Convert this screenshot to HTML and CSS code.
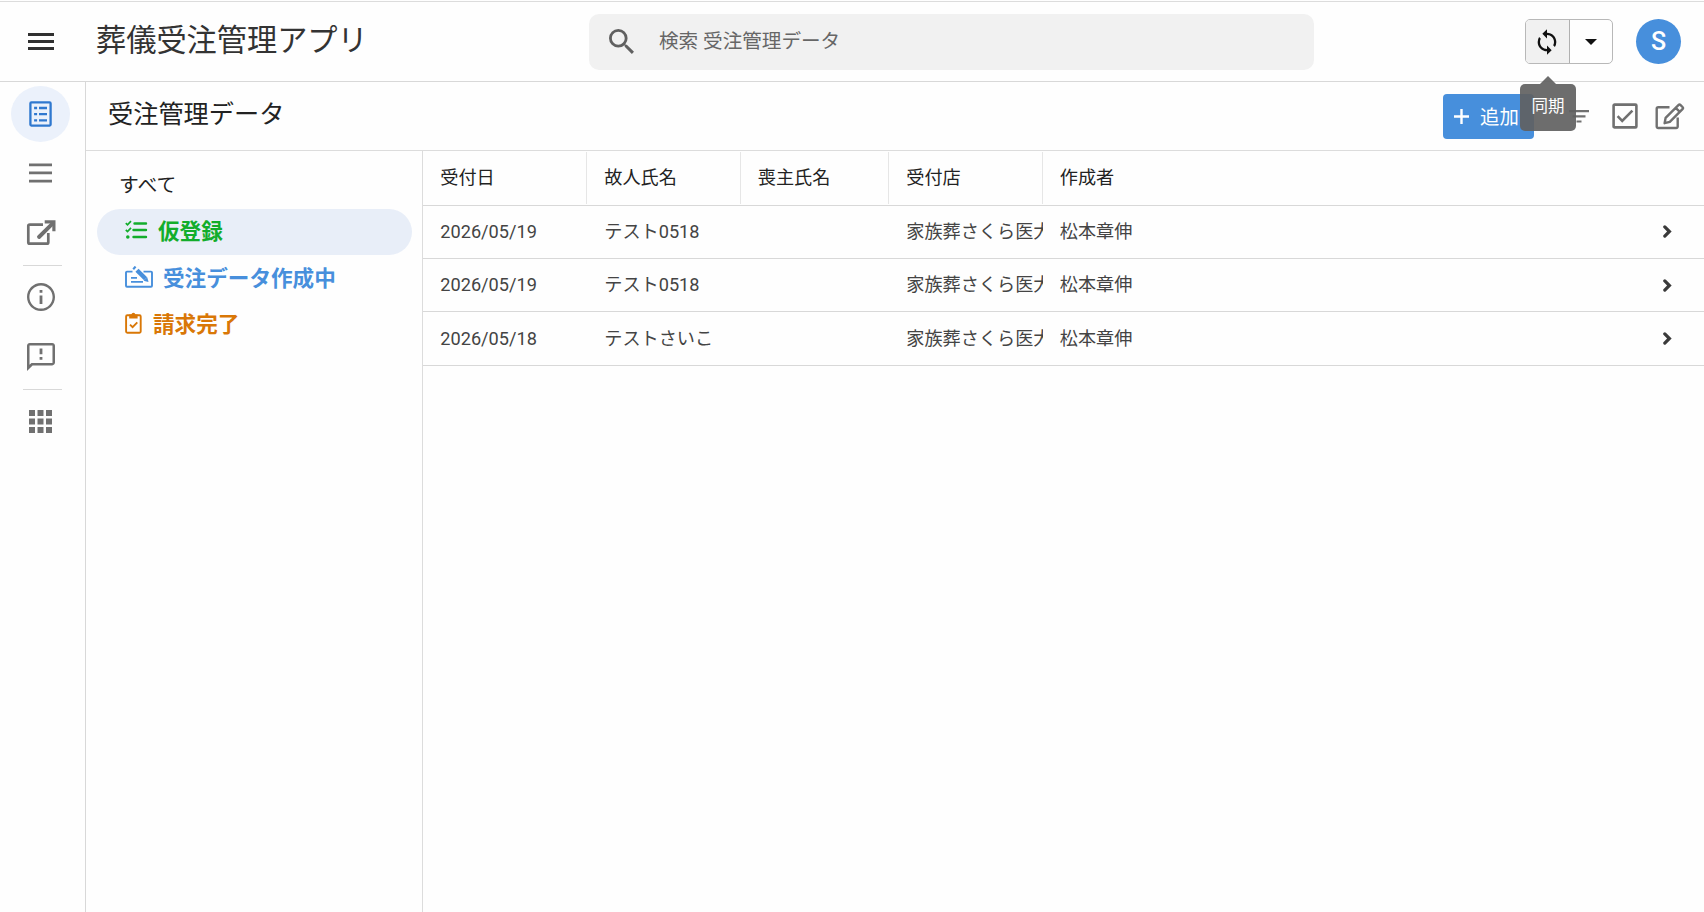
FILE: index.html
```html
<!DOCTYPE html>
<html lang="ja">
<head>
  <meta charset="UTF-8" />
  <meta name="viewport" content="width=device-width, initial-scale=1.0" />
  <title>葬儀受注管理アプリ</title>
  <link rel="stylesheet" href="styles.css">
</head>
<body>
  <header class="topbar">
    <button class="menu-btn" aria-label="メニュー">
      <svg width="26" height="18" viewBox="0 0 26 18" fill="#303030"><path d="M0 0h26v3H0zM0 7h26v3H0zM0 14h26v3H0z"/></svg>
    </button>
    <h1 class="app-title">葬儀受注管理アプリ</h1>
    <div class="search">
      <svg class="search-icon" width="25" height="25" viewBox="3 3 17.5 17.5" fill="#606060"><path d="M15.5 14h-.79l-.28-.27A6.471 6.471 0 0 0 16 9.5 6.5 6.5 0 1 0 9.5 16c1.61 0 3.09-.59 4.23-1.57l.27.28v.79l5 4.99L20.49 19l-4.99-5zm-6 0C7.01 14 5 11.99 5 9.5S7.01 5 9.5 5 14 7.01 14 9.5 11.99 14 9.5 14z"/></svg>
      <span class="search-text">検索 受注管理データ</span>
    </div>
    <div class="sync-group">
      <button class="sync-btn" aria-label="同期">
        <svg width="28" height="28" viewBox="0 0 24 24" fill="#111"><path d="M12 4V1L8 5l4 4V6c3.31 0 6 2.69 6 6 0 1.01-.25 1.97-.7 2.8l1.46 1.46A7.93 7.93 0 0 0 20 12c0-4.42-3.58-8-8-8zm0 14c-3.31 0-6-2.69-6-6 0-1.01.25-1.97.7-2.8L5.24 7.74A7.93 7.93 0 0 0 4 12c0 4.42 3.58 8 8 8v3l4-4-4-4v3z"/></svg>
      </button>
      <button class="sync-more" aria-label="その他">
        <svg width="12" height="6" viewBox="0 0 12 6" fill="#111"><path d="M0 0h12L6 6z"/></svg>
      </button>
      <div class="tooltip">同期</div>
    </div>
    <div class="avatar">S</div>
  </header>

  <div class="layout">
    <nav class="rail">
      <div class="rail-item active">
        <svg width="23" height="26" viewBox="0 0 23 26" fill="none" stroke="#2f78cf" stroke-width="2.3"><rect x="1.4" y="1.4" width="20.2" height="23.2" rx="1"/><path d="M5.1 7h3M5.1 13.2h3M5.1 19.4h3M10 7h8M10 13.2h8M10 19.4h8"/></svg>
      </div>
      <div class="rail-item">
        <svg width="23" height="20" viewBox="0 0 23 20" fill="#707070"><path d="M0 .5h23v2.7H0zM0 8.6h23v2.7H0zM0 16.7h23v2.7H0z"/></svg>
      </div>
      <div class="rail-item">
        <svg width="30" height="26" viewBox="0 0 30 26" fill="none" stroke="#707070" stroke-width="2.7"><path d="M17 4.6H3.8a1.5 1.5 0 0 0-1.5 1.5v16.1a1.5 1.5 0 0 0 1.5 1.5h17a1.5 1.5 0 0 0 1.5-1.5V13"/><path d="M13 17L26 4.2" stroke-width="3.9" stroke-linecap="round"/><path d="M18.7 1.8h9.2v9.4" stroke-width="3.2"/></svg>
      </div>
      <div class="rail-divider"></div>
      <div class="rail-item">
        <svg width="28" height="28" viewBox="2 2 20 20" fill="#707070"><path d="M11 7h2v2h-2zm0 4h2v6h-2zm1-9C6.48 2 2 6.48 2 12s4.48 10 10 10 10-4.48 10-10S17.52 2 12 2zm0 18.3c-4.6 0-8.3-3.7-8.3-8.3S7.4 3.7 12 3.7s8.3 3.7 8.3 8.3-3.7 8.3-8.3 8.3z"/></svg>
      </div>
      <div class="rail-item">
        <svg width="28" height="28" viewBox="2 2 20 20" fill="#707070"><path d="M20 2H4c-1.1 0-2 .9-2 2v18l4-4h14c1.1 0 2-.9 2-2V4c0-1.1-.9-2-2-2zm.2 14.2H5.2l-1.4 1.4V3.8h16.4v12.4zM11 12h2v2h-2zm0-6h2v4h-2z"/></svg>
      </div>
      <div class="rail-divider"></div>
      <div class="rail-item">
        <svg width="23" height="23" viewBox="0 0 23 23" fill="#707070"><path d="M0 0h6v6H0zM8.5 0h6v6h-6zM17 0h6v6h-6zM0 8.5h6v6H0zM8.5 8.5h6v6h-6zM17 8.5h6v6h-6zM0 17h6v6H0zM8.5 17h6v6h-6zM17 17h6v6h-6z"/></svg>
      </div>
    </nav>

    <main class="main">
      <div class="view-header">
        <h2 class="view-title">受注管理データ</h2>
        <button class="add-btn">
          <svg width="15" height="15" viewBox="0 0 15 15" fill="#fff"><path d="M6.3 0h2.4v6.3H15v2.4H8.7V15H6.3V8.7H0V6.3h6.3z"/></svg>
          <span>追加</span>
        </button>
        <svg class="filter-icon" width="20" height="13" viewBox="0 0 20 13" fill="#707070"><path d="M0 0h20v2.2H0zM3.5 5.2h13v2.2h-13zM7.5 10.4h5v2.2h-5z"/></svg>
        <svg class="check-icon" width="26" height="26" viewBox="0 0 26 26" fill="none" stroke="#707070" stroke-width="2.6"><rect x="1.6" y="1.6" width="22.8" height="22.8" rx="1"/><path d="M5.6 13.2l4.6 4.6L20.4 7.6"/></svg>
        <svg class="edit-icon" width="30" height="27" viewBox="0 0 30 27" fill="none" stroke="#707070" stroke-width="2.4"><path d="M14.5 4.2H3.2a1.5 1.5 0 0 0-1.5 1.5v17.8A1.5 1.5 0 0 0 3.2 25h18a1.5 1.5 0 0 0 1.5-1.5V14.5"/><path d="M9.6 20.2l1-5.3L23.4 2.1a1.6 1.6 0 0 1 2.2 0l1.9 1.9a1.6 1.6 0 0 1 0 2.2L14.8 18.9zM20.7 4.8l4.1 4.1" stroke-linejoin="round"/></svg>
      </div>

      <div class="content">
        <aside class="views">
          <div class="view all"><span>すべて</span></div>
          <div class="view draft">
            <svg width="23" height="20" viewBox="0 0 23 20" fill="none" stroke="#12ad2b" stroke-width="2.4"><path d="M9.5 3.5h11.5M8.5 10h12.5M8.5 17h12.5" stroke-linecap="round"/><path d="M.8 3.2l1.7 1.6L6 1.2M.8 9.9l1.7 1.6L6 7.9" stroke-width="1.7"/><circle cx="2.8" cy="17" r="1.8" fill="#12ad2b" stroke="none"/></svg>
            <span>仮登録</span>
          </div>
          <div class="view working">
            <svg width="28" height="22" viewBox="0 0 28 22" fill="none" stroke="#478fdc" stroke-width="1.9"><path d="M7.5 5.6H2a1 1 0 0 0-1 1v13.2a1 1 0 0 0 1 1h24a1 1 0 0 0 1-1V6.6a1 1 0 0 0-1-1h-7.5"/><path d="M6 11.8h6M6 15.8h12" stroke-width="1.7"/><path d="M12 4.2l8.6 8.6" stroke-width="4.4"/><path d="M18.6 14.8l5 1.2-1.4-4.8z" fill="#478fdc" stroke="none"/><path d="M8.6 1.2l1.6 1.4" stroke-width="3.6"/></svg>
            <span>受注データ作成中</span>
          </div>
          <div class="view billed">
            <svg width="17" height="22" viewBox="0 0 17 22" fill="none" stroke="#d97706" stroke-width="1.9"><rect x="1.1" y="3.3" width="14.6" height="17.4" rx="1.2"/><path d="M4.2 2.4h2.1a2.2 2.2 0 0 1 4.2 0h2.1v4.2H4.2z" fill="#d97706" stroke="none"/><path d="M5 12.6l2.6 2.6 4.7-4.8"/></svg>
            <span>請求完了</span>
          </div>
        </aside>

        <section class="table">
          <div class="row head">
            <div class="cell">受付日</div>
            <div class="cell">故人氏名</div>
            <div class="cell">喪主氏名</div>
            <div class="cell">受付店</div>
            <div class="cell">作成者</div>
          </div>
          <div class="row">
            <div class="cell">2026/05/19</div>
            <div class="cell">テスト0518</div>
            <div class="cell"></div>
            <div class="cell">家族葬さくら医大</div>
            <div class="cell">松本章伸</div>
            <svg class="chevron" width="9" height="13" viewBox="0 0 9 13"><path d="M1.8 1.9l4.6 4.6-4.6 4.6"/></svg>
          </div>
          <div class="row">
            <div class="cell">2026/05/19</div>
            <div class="cell">テスト0518</div>
            <div class="cell"></div>
            <div class="cell">家族葬さくら医大</div>
            <div class="cell">松本章伸</div>
            <svg class="chevron" width="9" height="13" viewBox="0 0 9 13"><path d="M1.8 1.9l4.6 4.6-4.6 4.6"/></svg>
          </div>
          <div class="row">
            <div class="cell">2026/05/18</div>
            <div class="cell">テストさいこ</div>
            <div class="cell"></div>
            <div class="cell">家族葬さくら医大</div>
            <div class="cell">松本章伸</div>
            <svg class="chevron" width="9" height="13" viewBox="0 0 9 13"><path d="M1.8 1.9l4.6 4.6-4.6 4.6"/></svg>
          </div>
        </section>
      </div>
    </main>
  </div>
</body>
</html>
```
FILE: styles.css
```css
* {
  box-sizing: border-box;
}

body {
  margin: 0;
  height: 100vh;
  display: flex;
  flex-direction: column;
  overflow: hidden;
  background: #fefefe;
  color: #222;
  font-family: Roboto, "Noto Sans CJK JP", sans-serif;
  font-size: 18.15px;
}

h1, h2 {
  margin: 0;
  font-weight: 400;
}

button {
  padding: 0;
  border: none;
  background: none;
  font-family: inherit;
  cursor: pointer;
}

svg {
  display: block;
  flex: none;
}

/* top bar */
.topbar {
  display: flex;
  align-items: center;
  flex: none;
  height: 81px;
  margin-top: 1px;
  padding-right: 23px;
  border-top: 1px solid #dcdcdc;
  border-bottom: 1px solid #d8d8d8;
}

.menu-btn {
  margin-left: 28px;
}

.app-title {
  width: 493px;
  margin-left: 42px;
  padding-bottom: 2px;
  font-size: 30.2px;
  line-height: 40px;
  color: #333;
  white-space: nowrap;
}

.search {
  display: flex;
  align-items: center;
  width: 725px;
  height: 56px;
  padding-left: 20px;
  border-radius: 10px;
  background: #f1f1f1;
}

.search-text {
  margin-left: 25px;
  padding-top: 1px;
  font-size: 19.6px;
  line-height: 28px;
  color: #666;
}

.sync-group {
  display: flex;
  position: relative;
  width: 88px;
  height: 45px;
  margin-left: auto;
  border: 1px solid #b8b8b8;
  border-radius: 5px;
}

.sync-btn, .sync-more {
  display: flex;
  flex: 1;
  align-items: center;
  justify-content: center;
}

.sync-btn {
  border-right: 1px solid #b0b0b0;
  border-radius: 4px 0 0 4px;
  background: #f1f1f1;
}

.tooltip {
  position: absolute;
  z-index: 2;
  top: 64px;
  left: -6px;
  width: 56px;
  height: 47px;
  border-radius: 5px;
  background: rgba(97, 97, 97, 0.92);
  color: #fff;
  font-size: 16.5px;
  line-height: 45px;
  text-align: center;
}

.tooltip::before {
  content: "";
  position: absolute;
  top: -8px;
  left: 20px;
  border: 8px solid transparent;
  border-top: 0;
  border-bottom-color: rgba(97, 97, 97, 0.92);
}

.avatar {
  width: 45px;
  height: 45px;
  margin-left: 23px;
  border-radius: 50%;
  background: #478fdc;
  color: #fff;
  font-size: 25px;
  font-weight: 500;
  line-height: 45px;
  text-align: center;
}

.layout {
  display: flex;
  flex: 1;
  min-height: 0;
}

/* icon rail */
.rail {
  width: 86px;
  flex: none;
  padding-top: 2px;
  border-right: 1px solid #d8d8d8;
}

.rail-item {
  display: flex;
  align-items: center;
  justify-content: center;
  width: 59px;
  height: 59.5px;
  margin-left: 11px;
}

.rail-item.active {
  height: 56px;
  margin-top: 2px;
  margin-bottom: 1.5px;
  border-radius: 50%;
  background: #ebf1fb;
}

.rail-divider {
  width: 39px;
  height: 1px;
  margin: 2px 0 2px 23px;
  background: #d8d8d8;
}

.main {
  display: flex;
  flex: 1;
  flex-direction: column;
  min-width: 0;
}

.view-header {
  display: flex;
  align-items: center;
  flex: none;
  height: 69px;
  padding: 0 19px 0 22px;
  border-bottom: 1px solid #dcdcdc;
}

.view-title {
  padding-bottom: 2px;
  font-size: 25.2px;
  line-height: 34px;
}

.add-btn {
  display: flex;
  align-items: center;
  width: 91px;
  height: 45px;
  margin-left: auto;
  padding-left: 11px;
  border-radius: 4px;
  background: #478fdc;
  color: #fff;
  font-size: 19.4px;
}

.add-btn span {
  margin-left: 11px;
  padding-bottom: 2px;
  white-space: nowrap;
}

.filter-icon {
  margin-left: 35px;
}

.check-icon {
  margin-left: 23px;
}

.edit-icon {
  margin-left: 17px;
}

.content {
  display: flex;
  flex: 1;
  min-height: 0;
}

/* view list */
.views {
  width: 337px;
  flex: none;
  padding: 11px 10px 0 11px;
  border-right: 1px solid #dcdcdc;
}

.view {
  display: flex;
  align-items: center;
  height: 46.5px;
  padding-left: 28px;
  border-radius: 24px;
  font-size: 21.6px;
  font-weight: 700;
}

.view span {
  padding-bottom: 4px;
}

.view svg {
  margin-bottom: 3px;
}

.all {
  padding-left: 22px;
  font-size: 19.8px;
  font-weight: 400;
}

.draft {
  background: #e8eef8;
  color: #12ad2b;
}

.working {
  color: #478fdc;
}

.billed {
  color: #d97706;
}

.draft span {
  margin-left: 10px;
}

.working span {
  margin-left: 10px;
}

.billed span {
  margin-left: 11px;
}

/* data table */
.table {
  flex: 1;
  min-width: 0;
}

.row {
  display: grid;
  grid-template-columns: 164px 153.5px 148.5px 153.5px 1fr 41px;
  align-items: center;
  height: 53.4px;
  border-bottom: 1px solid #d8d8d8;
  color: #444;
}

.row.head {
  height: 54.6px;
  color: #222;
}

.cell {
  overflow: hidden;
  padding-left: 17.3px;
  line-height: 50px;
  white-space: nowrap;
}

.head .cell {
  height: 52px;
  border-right: 1px solid #e6e6e6;
  line-height: 52px;
}

.head .cell:last-child {
  border-right: none;
}

.chevron {
  fill: none;
  stroke: #3a3a3a;
  stroke-width: 3.2;
  stroke-linecap: round;
}
```
